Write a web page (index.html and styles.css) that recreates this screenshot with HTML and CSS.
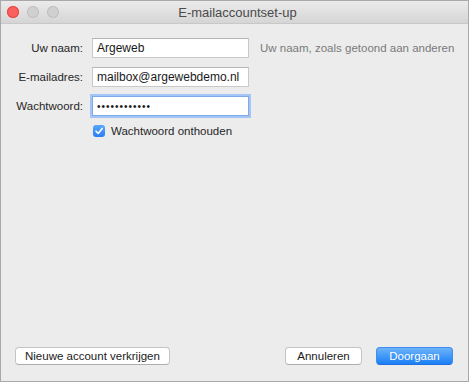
FILE: index.html
```html
<!DOCTYPE html>
<html lang="nl">
<head>
    <meta charset="UTF-8">
    <title>E-mailaccountset-up</title>
    <link rel="stylesheet" href="styles.css">
</head>
<body>
    <div class="window">
        <div class="titlebar">
            <div class="lights">
                <span class="light close"></span>
                <span class="light"></span>
                <span class="light"></span>
            </div>
            <div class="title">E-mailaccountset-up</div>
        </div>

        <div class="content">
            <div class="form">
                <label class="label">Uw naam:</label>
                <input class="field" type="text" value="Argeweb">
                <span class="hint">Uw naam, zoals getoond aan anderen</span>

                <label class="label">E-mailadres:</label>
                <input class="field" type="text" value="mailbox@argewebdemo.nl">
                <span></span>

                <label class="label">Wachtwoord:</label>
                <input class="field focus" type="password" value="argewebdemo1">
                <span></span>

                <span></span>
                <label class="remember">
                    <span class="check">
                        <svg width="10" height="10" viewBox="0 0 10 10"><path d="M2 5.2 L4.2 7.4 L8.2 2.4" fill="none" stroke="#fff" stroke-width="1.6" stroke-linecap="round" stroke-linejoin="round"/></svg>
                    </span>
                    Wachtwoord onthouden
                </label>
                <span></span>
            </div>

            <div class="footer">
                <button class="btn">Nieuwe account verkrijgen</button>
                <div class="right-buttons">
                    <button class="btn small">Annuleren</button>
                    <button class="btn small primary">Doorgaan</button>
                </div>
            </div>
        </div>
    </div>
</body>
</html>
```

FILE: styles.css
```css
body {
    margin: 0;
    padding: 0;
    font-family: "Liberation Sans", Arial, sans-serif;
    font-size: 11.5px;
    color: #222;
}

.window {
    width: 469px;
    height: 382px;
    box-sizing: border-box;
    border: 1px solid #a9a9a9;
    background-color: #ececec;
    display: flex;
    flex-direction: column;
}

.titlebar {
    height: 22px;
    border-bottom: 1px solid #c8c8c8;
    background: linear-gradient(#ebebeb, #d5d5d5);
    position: relative;
    display: flex;
    align-items: center;
    justify-content: center;
}

.lights {
    position: absolute;
    left: 6px;
    top: 5px;
    display: flex;
    gap: 8px;
}

.light {
    width: 12px;
    height: 12px;
    border-radius: 50%;
    background-color: #d0d0d0;
    box-shadow: inset 0 0 0 1px #c0c0c0;
}

.light.close {
    background-color: #fc605c;
    box-shadow: inset 0 0 0 1px #e2463f;
}

.title {
    font-size: 13px;
    color: #4a4a4a;
    padding-left: 6px;
}

.content {
    flex: 1;
    display: flex;
    flex-direction: column;
    justify-content: space-between;
    padding: 14px 15px 16px 13px;
}

.form {
    display: grid;
    grid-template-columns: 69px 157px auto;
    column-gap: 9px;
    row-gap: 9px;
    align-items: center;
}

.label {
    text-align: right;
    white-space: nowrap;
    color: #262626;
}

.field {
    height: 20px;
    box-sizing: border-box;
    margin: 0;
    border: 1px solid #c9c9c9;
    border-top-color: #b5b5b5;
    background-color: #fff;
    padding: 0 4px;
    font-family: "Liberation Sans", Arial, sans-serif;
    font-size: 12px;
    color: #1a1a1a;
    outline: none;
}

.field.focus {
    border-color: #7fa9e8;
    box-shadow: 0 0 0 2px #a4c6f7;
    letter-spacing: 1px;
    font-size: 10px;
}

.hint {
    color: #7a7a7a;
    padding-left: 2px;
    white-space: nowrap;
}

.remember {
    display: flex;
    align-items: center;
    gap: 6px;
    padding-left: 1px;
    color: #262626;
}

.check {
    width: 12px;
    height: 12px;
    border-radius: 3px;
    background: linear-gradient(#5aa6fb, #2a7ef3);
    display: flex;
    align-items: center;
    justify-content: center;
}

.footer {
    display: flex;
    justify-content: space-between;
    align-items: center;
    padding-left: 1px;
}

.right-buttons {
    display: flex;
    gap: 14px;
}

.btn {
    height: 18px;
    padding: 0 9px;
    border: 1px solid #c4c4c4;
    border-bottom-color: #adadad;
    border-radius: 4px;
    background-color: #fff;
    font-family: "Liberation Sans", Arial, sans-serif;
    font-size: 11.5px;
    color: #1a1a1a;
    line-height: 16px;
}

.btn.small {
    width: 77px;
    padding: 0;
}

.btn.primary {
    background: linear-gradient(#6cb3fa, #1a7ff5);
    border-color: #3f8cf2;
    border-bottom-color: #1f6fe0;
    color: #fff;
}
```
